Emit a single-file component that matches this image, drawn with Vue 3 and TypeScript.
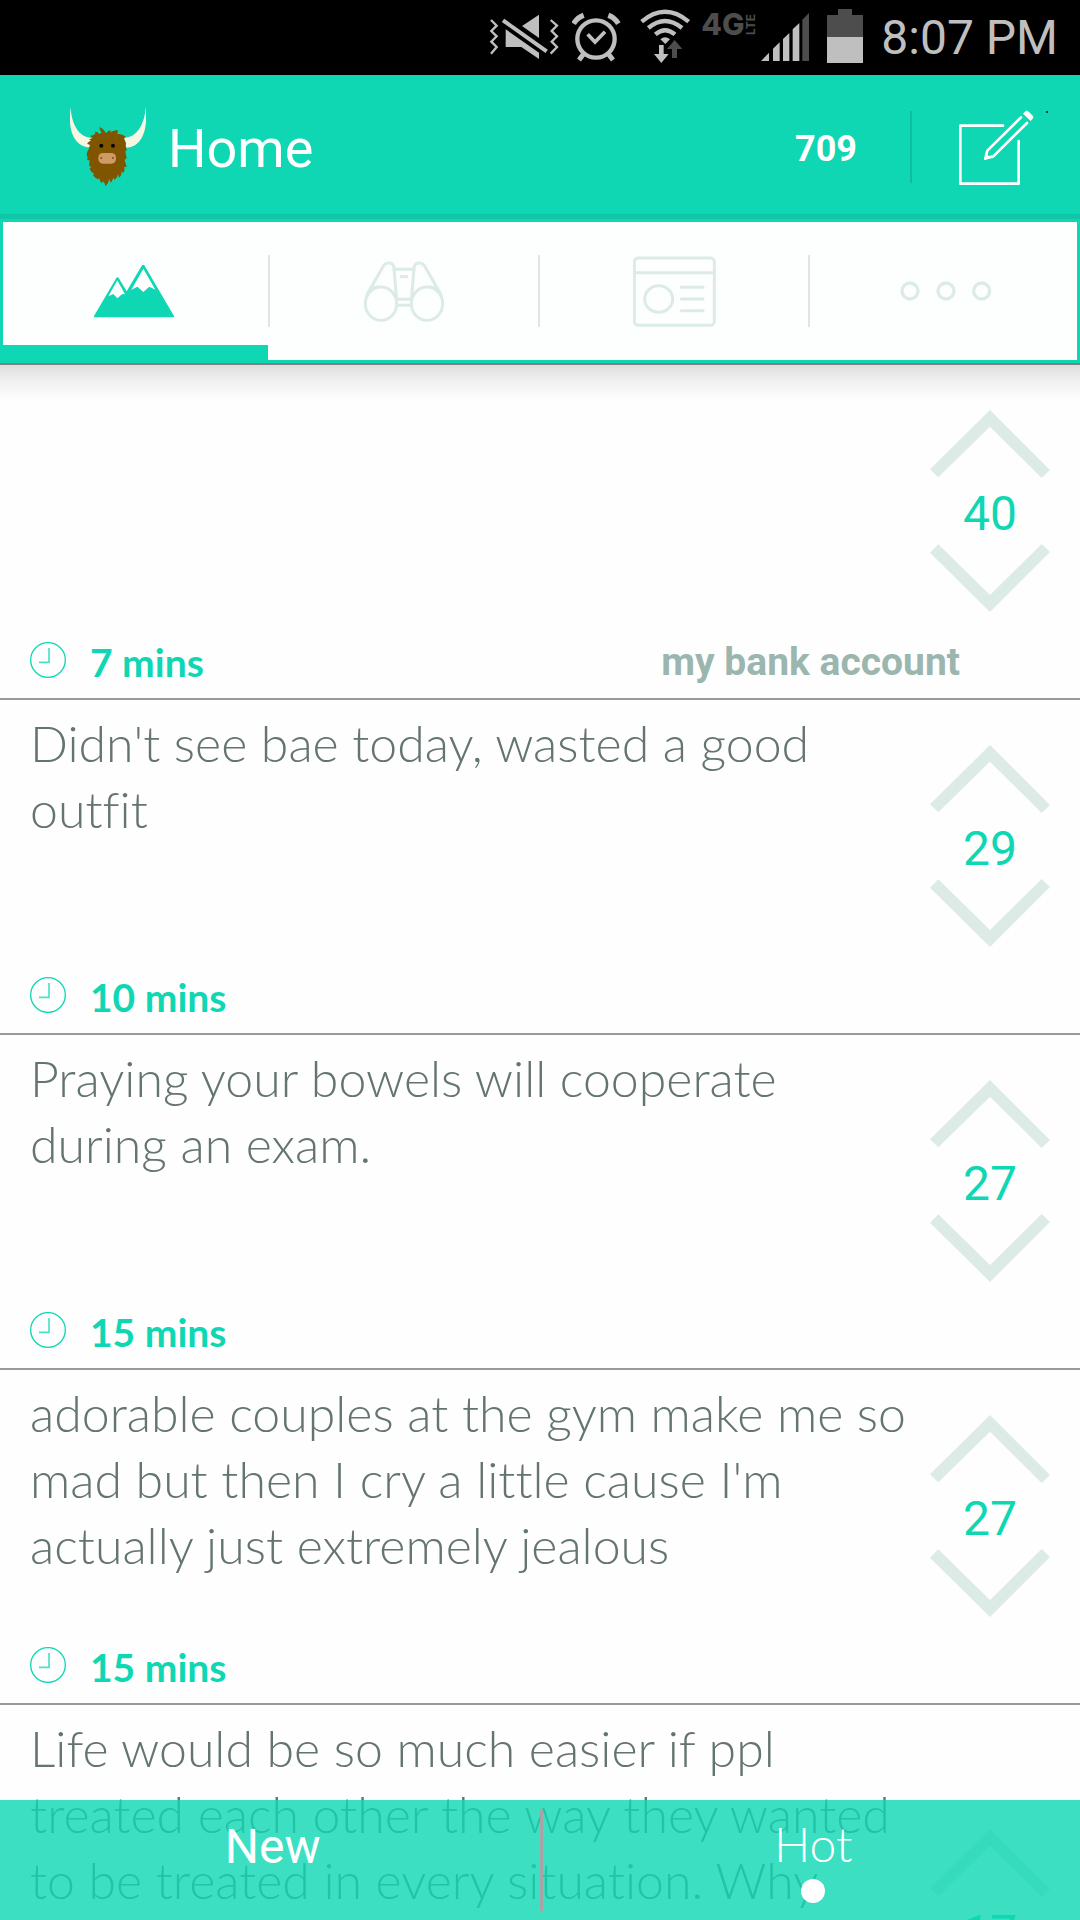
<script setup lang="ts">
import { ref } from 'vue'

interface Post {
  id: number
  lines: string[]
  votes: number
  age: string
  handle?: string
  tall?: boolean
}

const karma = 709
const activeTab = ref<number>(0)

const posts: Post[] = [
  { id: 1, lines: [], votes: 40, age: '7 mins', handle: 'my bank account' },
  { id: 2, lines: ["Didn't see bae today, wasted a good", 'outfit'], votes: 29, age: '10 mins' },
  { id: 3, lines: ['Praying your bowels will cooperate', 'during an exam.'], votes: 27, age: '15 mins' },
  {
    id: 4,
    lines: ['adorable couples at the gym make me so', "mad but then I cry a little cause I'm", 'actually just extremely jealous'],
    votes: 27,
    age: '15 mins',
  },
  {
    id: 5,
    lines: ['Life would be so much easier if ppl', 'treated each other the way they wanted', 'to be treated in every situation. Why'],
    votes: 17,
    age: '',
    tall: true,
  },
]
</script>

<template>
  <div class="screen">
    <div class="status">
      <svg width="83" height="75" viewBox="27 0 249 225" aria-hidden="true">
        <path d="M77 88V141H124L177 177V158ZM126 78L177 44V114Z" fill="#bfbfbf" />
        <path d="M69 61L200 154" stroke="#bfbfbf" stroke-width="12" />
        <path d="M33 60L50 77L34 93L50 109L34 125L50 141L33 161M212 60L231 77L215 93L231 109L215 125L231 141L212 161" fill="none" stroke="#bfbfbf" stroke-width="7" />
      </svg>
      <svg width="68" height="75" viewBox="276 0 204 225" aria-hidden="true">
        <g fill="none" stroke="#bfbfbf">
          <circle cx="348" cy="117" r="56" stroke-width="13" />
          <path d="M323 103L345 126L375 95" stroke-width="11" />
          <path d="M310 163L297 180M386 163L399 180" stroke-width="15" />
          <path d="M281 71Q292 53 311 46M415 71Q404 53 385 46" stroke-width="16" />
        </g>
      </svg>
      <svg width="61" height="75" viewBox="480 0 183 225" aria-hidden="true">
        <g fill="none" stroke="#bfbfbf" stroke-width="13">
          <path d="M485 65Q555 6 626 65" />
          <path d="M505 84Q555 42 606 84" />
          <path d="M526 103Q555 78 585 103" />
        </g>
        <path d="M541 118Q555 105 570 118L556 132Z" fill="#bfbfbf" />
        <path d="M537 135H551V162H566L544 189L522 162H537Z" fill="#bfbfbf" />
        <path d="M576 174H591V147H607L584 120L561 147H576Z" fill="#4d4d4d" />
      </svg>
      <div class="network"><span>4G</span><span class="lte">LTE</span></div>
      <svg width="67" height="75" viewBox="-60 0 201 225" aria-hidden="true">
        <path d="M-57 183L-33 158V183ZM-21 183V146L-1 127V183ZM9 183V117L28 99V183ZM38 183V88L58 69V183Z" fill="#bfbfbf" />
        <path d="M67 183V59L87 39V183Z" fill="#4d4d4d" />
      </svg>
      <svg width="54" height="75" viewBox="141 0 162 225" aria-hidden="true">
        <path d="M141 45H174V27H216V45H249V111H141Z" fill="#4d4d4d" />
        <path d="M141 111H249V189H141Z" fill="#bfbfbf" />
      </svg>
      <time>8:07 PM</time>
    </div>

    <header class="appbar">
      <svg class="yak" width="76" height="82" viewBox="60 48 228 246" aria-hidden="true">
        <path d="M62 51C63 82 75 141 126 144L119 172C83 172 50 137 62 51ZM287 51C286 82 272 141 222 144L229 173C267 173 296 133 287 51Z" fill="#f5f7e3" />
        <path d="M148 111Q160 115 168 130Q174 121 182 121L181 127Q191 121 204 120L202 132Q217 130 227 140Q220 144 224 150Q230 158 227 168L230 181L226 184L230 204L224 210L230 231L223 230Q225 244 219 249L215 244Q215 258 207 263L204 252Q203 263 194 270L190 263Q187 273 182 278L178 267Q175 280 167 289Q164 277 158 274L155 280Q149 275 148 265L143 268Q132 263 129 254L133 251Q121 246 119 234L124 232L117 226L119 211L112 211Q111 203 116 196L111 202Q109 187 115 180L120 166L111 160L123 151L117 148L128 144Q122 139 121 137Q130 137 136 131L135 126Q143 124 147 132L155 128Q149 120 148 111Z" fill="#7f5500" />
        <circle cx="154" cy="167" r="6" fill="#0c0500" /><circle cx="189" cy="167" r="6" fill="#0c0500" />
        <rect x="145" y="189" width="53" height="32" rx="14" fill="#cf9a66" />
        <circle cx="154" cy="204" r="3" fill="#7f4a20" /><circle cx="189" cy="204" r="3" fill="#7f4a20" />
      </svg>
      <h1>Home</h1>
      <span class="karma">{{ karma }}</span>
      <button class="compose" type="button" aria-label="New post">
        <svg width="90" height="75" viewBox="537 102 270 225" aria-hidden="true">
          <g fill="none" stroke="#fff" stroke-width="8" stroke-linecap="round" stroke-linejoin="round">
            <path d="M669 149H541V323H716V195" />
            <path d="M723 124L622 224L616 247L640 241L741 141" />
          </g>
          <path d="M612 252L618 232L631 245Z" fill="#fff" />
          <path d="M730 113L737 106Q741 104 745 107L757 119Q760 123 758 127L752 134Z" fill="#fff" stroke="#fff" stroke-width="2" />
          <rect x="798" y="105" width="6" height="6" fill="#06473b" />
        </svg>
      </button>
    </header>

    <nav class="tabs">
      <button type="button" aria-label="Home" :class="{ active: activeTab === 0 }" @click="activeTab = 0">
        <svg width="80" height="54" viewBox="282 160 240 162" aria-hidden="true">
          <path d="M282 320V316L349 202Q352 198 356 202L380 242L426 164Q429 160 433 164L522 316V320Z" fill="#0fd7b3" />
          <path d="M325 257L352 209L375 251Q368 249 366 251L352 263L340 250ZM394 237L430 174L466 237L448 228L430 244L412 228Z" fill="#fdfefe" />
        </svg>
      </button>
      <button type="button" aria-label="Peek" :class="{ active: activeTab === 1 }" @click="activeTab = 1">
        <svg width="80" height="61" viewBox="72 121 240 183" aria-hidden="true">
          <g fill="none" stroke="#ddebe7" stroke-width="9">
            <ellipse cx="123" cy="249" rx="47" ry="50" /><ellipse cx="261" cy="249" rx="47" ry="50" />
            <path d="M80 224L130 136C140 121 161 125 162 144L170 238M304 224L254 136C244 121 223 125 222 144L214 238M162 146H222M170 236H214M172 254H212M94 206Q100 199 114 199M290 206Q284 199 270 199" />
            <path d="M180 168H204" />
          </g>
        </svg>
      </button>
      <button type="button" aria-label="My yaks" :class="{ active: activeTab === 2 }" @click="activeTab = 2">
        <svg width="83" height="71" viewBox="879 106 249 213" aria-hidden="true">
          <g fill="none" stroke="#ddebe7" stroke-width="9">
            <rect x="883" y="112" width="240" height="202" rx="12" />
            <path d="M883 156H1123" />
            <ellipse cx="956" cy="235" rx="42" ry="40" />
            <path d="M1024 200H1089M1024 235H1089M1024 270H1089" stroke-linecap="round" />
          </g>
        </svg>
      </button>
      <button type="button" aria-label="More" :class="{ active: activeTab === 3 }" @click="activeTab = 3">
        <svg width="92" height="20" viewBox="359 213 276 60" aria-hidden="true">
          <g fill="none" stroke="#ddebe7" stroke-width="10">
            <circle cx="389" cy="243" r="24" /><circle cx="497" cy="243" r="24" /><circle cx="604" cy="243" r="24" />
          </g>
        </svg>
      </button>
    </nav>

    <main class="feed">
      <article v-for="post in posts" :key="post.id" :class="{ tall: post.tall }">
        <div class="content">
          <p>{{ post.lines.join('\n') }}</p>
          <div class="votes">
            <button type="button" aria-label="Upvote">
              <svg width="120" height="68" viewBox="90 60 360 204" aria-hidden="true"><path d="M90 238L270 60L450 240L425 264L270 110L115 262Z" fill="#ddebe7" /></svg>
            </button>
            <span>{{ post.votes }}</span>
            <button type="button" aria-label="Downvote">
              <svg width="120" height="68" viewBox="90 462 360 204" aria-hidden="true"><path d="M90 488L115 463L270 615L425 462L450 486L270 666Z" fill="#ddebe7" /></svg>
            </button>
          </div>
        </div>
        <div v-if="post.age" class="meta">
          <svg width="36" height="36" viewBox="0 0 108 108" fill="none" stroke="#0fd7b3" aria-hidden="true">
            <circle cx="54" cy="54" r="52" stroke-width="4" />
            <path d="M57 18V61H27" stroke-width="5" opacity=".75" />
          </svg>
          <span class="age">{{ post.age }}</span>
          <span v-if="post.handle" class="handle">{{ post.handle }}</span>
        </div>
      </article>
    </main>

    <footer class="sort">
      <button type="button">New</button>
      <span class="rule"></span>
      <button type="button" class="selected">Hot</button>
    </footer>
  </div>
</template>

<style>
body {
  margin: 0;
  background: #fefefe;
}
</style>

<style scoped>
.screen {
  position: relative;
  display: flex;
  flex-direction: column;
  height: 100vh;
  overflow: hidden;
  background: #fefefe;
  font-family: Roboto, sans-serif;
}
button {
  padding: 0;
  border: 0;
  background: none;
  color: inherit;
  font: inherit;
  cursor: pointer;
}
svg {
  display: block;
  flex: none;
}
.status {
  display: flex;
  flex: none;
  align-items: center;
  justify-content: flex-end;
  height: 75px;
  padding-right: 22px;
  background: #000;
  color: #bfbfbf;
}
.status time {
  font-size: 48px;
  line-height: 75px;
}
.network {
  display: flex;
  width: 59px;
  padding-bottom: 28px;
  color: #4d4d4d;
  font: 800 30px/22px Inter, sans-serif;
}
.lte {
  writing-mode: vertical-rl;
  transform: rotate(180deg);
  font-size: 12px;
  font-weight: 700;
  line-height: 12px;
}
.appbar {
  display: flex;
  flex: none;
  align-items: center;
  height: 144px;
  box-sizing: border-box;
  padding: 0 31px 0 70px;
  background: #0fd7b3;
  box-shadow: inset 0 -5px #0fc6a7;
  color: #fff;
}
h1 {
  flex: 1;
  margin: 0 0 0 22px;
  padding-top: 4px;
  font-size: 54px;
  font-weight: 400;
  line-height: 64px;
}
.karma {
  padding-top: 4px;
  font-size: 36px;
  font-weight: 700;
}
.compose {
  display: flex;
  align-items: center;
  height: 72px;
  margin-left: 53px;
  padding-left: 47px;
  border-left: 2px solid #0fbea2;
}
.tabs {
  display: grid;
  flex: none;
  grid-template-columns: repeat(4, 1fr);
  height: 144px;
  border-bottom: 2px solid #808080;
  background: #fdfefe;
  box-shadow: inset 0 0 0 3px #0fd7b3;
}
.tabs button {
  position: relative;
  display: flex;
  align-items: center;
  justify-content: center;
}
.tabs button:not(:last-child) {
  padding-right: 2px;
}
.tabs button:last-child {
  padding-left: 2px;
}
.tabs button:not(:last-child)::after {
  content: '';
  position: absolute;
  top: 36px;
  right: 0;
  width: 2px;
  height: 72px;
  background: #e2e4e4;
}
.tabs .active::before {
  content: '';
  position: absolute;
  right: 2px;
  bottom: 0;
  left: 0;
  height: 18px;
  background: #0fd7b3;
}
.feed {
  position: relative;
  flex: 1;
  min-height: 0;
  overflow: hidden;
}
.feed::before {
  content: '';
  position: absolute;
  top: 0;
  right: 0;
  left: 0;
  height: 36px;
  background: linear-gradient(#dedede, #f2f2f2 50%, #fefefe);
}
article {
  display: flex;
  flex-direction: column;
  min-height: 335px;
  box-sizing: border-box;
  border-bottom: 2px solid #999;
}
article.tall {
  min-height: 493px;
  padding-bottom: 71px;
}
.content {
  display: flex;
  flex: 1;
  align-items: center;
  padding: 0 30px;
}
.content p {
  flex: 1;
  align-self: flex-start;
  min-width: 0;
  margin: 0;
  padding-top: 10px;
  color: #64746f;
  font-family: Lato, sans-serif;
  font-size: 50px;
  font-weight: 300;
  font-variant-ligatures: none;
  line-height: 66px;
  white-space: pre;
}
.votes {
  display: flex;
  flex: none;
  flex-direction: column;
  align-items: center;
  width: 120px;
  padding-top: 30px;
  color: #0fd7b3;
  font-size: 48px;
}
.votes span {
  padding-top: 6px;
  line-height: 60px;
}
.meta {
  display: flex;
  align-items: center;
  height: 66px;
  padding: 0 120px 5px 30px;
}
.age {
  margin-left: 24px;
  padding-top: 4px;
  color: #0fd7b3;
  font-family: Lato, sans-serif;
  font-size: 39px;
  font-weight: 700;
}
.handle {
  margin-left: auto;
  padding-top: 4px;
  color: #9bb5af;
  font-size: 39px;
  font-weight: 700;
}
.sort {
  position: absolute;
  right: 0;
  bottom: 0;
  left: 0;
  display: flex;
  align-items: center;
  height: 120px;
  padding-left: 6px;
  background: rgba(15, 215, 179, 0.81);
  color: #fff;
  font-size: 48px;
}
.sort button {
  position: relative;
  flex: 1;
  height: 120px;
  padding-bottom: 28px;
}
.rule {
  width: 3px;
  height: 102px;
  background: #a8a3a6;
}
.sort .selected {
  padding-bottom: 34px;
  padding-left: 4px;
  font-family: Lato, sans-serif;
  font-weight: 300;
}
.selected::after {
  content: '';
  position: absolute;
  bottom: 17px;
  left: calc(50% - 10px);
  width: 24px;
  height: 24px;
  border-radius: 50%;
  background: #fff;
}
</style>
